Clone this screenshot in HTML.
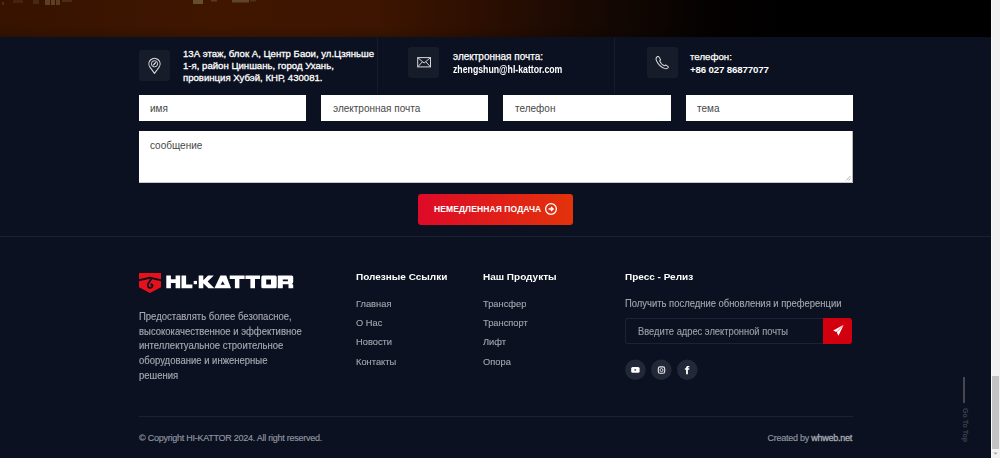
<!DOCTYPE html>
<html><head><meta charset="utf-8">
<style>
*{margin:0;padding:0;box-sizing:border-box}
html,body{width:1000px;height:458px;overflow:hidden;background:#0b1120;font-family:"Liberation Sans",sans-serif}
.abs{position:absolute;white-space:nowrap}
#hero{left:0;top:0;width:991px;height:37px;background:linear-gradient(90deg,#361300 0%,#401600 22%,#3d1500 38%,#2d0f01 48%,#1c0a03 57%,#0f0602 65%,#040100 72%,#000 80%,#000 100%)}
#hero2{left:0;top:0;width:991px;height:37px;background:linear-gradient(180deg,rgba(0,0,0,0) 0%,rgba(0,0,0,0) 70%,rgba(0,0,0,0.15) 100%)}
#sb{left:991px;top:0;width:9px;height:458px;background:#f1f1f1;border-left:1px solid #fafafa}
#thumb{left:992px;top:376px;width:7px;height:73px;background:#c3c3c3}
.vdiv{width:1px;background:#161c2b}
.ibox{width:31px;height:31px;background:#171c2b;border-radius:3px}
.ctext{color:#fff;font-size:9.6px;line-height:12.5px;-webkit-text-stroke:0.3px #fff}
.inp{background:#fff;height:26px}
.ph{color:#474747;font-size:10px;line-height:12px}
.hdiv{height:1px;background:#1a2030}
.ftit{color:#fff;font-size:9.2px;font-weight:bold;line-height:12px;margin-top:0px;transform:scaleX(1.087);transform-origin:0 0}
.flink{color:#a3a6ae;font-size:9.8px;line-height:12px;-webkit-text-stroke:0.12px #a3a6ae;transform:scaleX(0.95);transform-origin:0 0}
.desc{color:#a5a8b0;font-size:10px;line-height:14.7px;-webkit-text-stroke:0.15px #a5a8b0;transform:scaleX(0.95);transform-origin:0 0}
.soc{width:20px;height:20px;border-radius:50%;background:#232838}
.copy{color:#9296a0;font-size:9px;line-height:10px;letter-spacing:-0.25px;-webkit-text-stroke:0.15px #9296a0}
</style></head><body>
<div id="hero" class="abs"></div>
<div id="hero2" class="abs"></div>
<svg class="abs" style="left:0;top:0;filter:blur(0.7px)" width="300" height="8" viewBox="0 0 300 8">
 <g opacity="0.5">
 <rect x="2" y="2" width="2" height="3" fill="#7a5a30" opacity="0.7"/>
 <rect x="13" y="0" width="10" height="3" fill="#6a4a22" opacity="0.6"/>
 <rect x="33" y="0" width="6" height="4" fill="#6e5a38" opacity="0.6"/>
 <rect x="45" y="0" width="5" height="5" fill="#8d7e58" opacity="0.85"/>
 <rect x="51" y="0" width="4" height="5" fill="#8d7e58" opacity="0.85"/>
 <rect x="56" y="0" width="4" height="5" fill="#8a7a55" opacity="0.8"/>
 <rect x="62" y="0" width="10" height="2" fill="#7a6a48" opacity="0.6"/>
 <rect x="193" y="0" width="10" height="4" fill="#9a9865" opacity="0.85"/>
 <rect x="211" y="0" width="6" height="1.5" fill="#8a8458" opacity="0.7"/>
 <rect x="232" y="0" width="17" height="2.5" fill="#9a9865" opacity="0.75"/>
 <rect x="250" y="0" width="6" height="1.5" fill="#7a7048" opacity="0.6"/>
 </g>
</svg>


<!-- contact row -->
<div class="abs vdiv" style="left:377px;top:37px;height:57px"></div>
<div class="abs vdiv" style="left:614px;top:37px;height:57px"></div>

<div class="abs ibox" style="left:139px;top:50px"></div>
<svg class="abs" style="left:139px;top:50px" width="31" height="31" viewBox="0 0 31 31">
 <path d="M15.5 23.4 L10.95 17.2 A5.6 5.6 0 1 1 20.05 17.2 Z" fill="none" stroke="#d6d7da" stroke-width="1.1" stroke-linejoin="round"/>
 <circle cx="15.5" cy="13.8" r="3.1" fill="none" stroke="#d6d7da" stroke-width="1"/>
 <path d="M14.6 14.7 L16.5 12.8" stroke="#d6d7da" stroke-width="1.3" stroke-linecap="round"/>
</svg>
<div class="abs ctext" style="left:183px;top:48.3px;line-height:12.1px">13А этаж, блок А, Центр Баои, ул.Цзяньше<br>1-я, район Циншань, город Ухань,<br>провинция Хубэй, КНР, 430081.</div>

<div class="abs ibox" style="left:408px;top:47px"></div>
<svg class="abs" style="left:408px;top:47px" width="31" height="31" viewBox="0 0 31 31">
 <rect x="9.7" y="10.6" width="12.8" height="9.3" fill="none" stroke="#d6d7da" stroke-width="1"/>
 <path d="M9.9 10.8 L16.1 16 L22.3 10.8 M9.9 19.7 L14.2 15 M22.3 19.7 L18 15" fill="none" stroke="#d6d7da" stroke-width="1"/>
</svg>
<div class="abs" style="left:453px;top:51px;color:#fff;font-size:10px;line-height:12px;-webkit-text-stroke:0.25px #fff">электронная почта:</div>
<div class="abs" style="left:453px;top:64px;color:#fff;font-size:10.4px;font-weight:bold;line-height:12px;transform:scaleX(0.84);transform-origin:0 0">zhengshun@hl-kattor.com</div>

<div class="abs ibox" style="left:647px;top:47px"></div>
<svg class="abs" style="left:647px;top:47px" width="31" height="31" viewBox="0 0 31 31">
 <path transform="translate(9.5 9) scale(0.91) translate(-9.5 -9)" d="M10.6 9.6 C9 10.6 8.6 12.4 9.6 14.4 C11.4 18 14.6 21.2 18.2 22.6 C20.2 23.4 21.6 22.8 22.4 21.6 L22.6 21 L19.6 18.8 L18.4 19.8 C16.4 19.2 13.8 16.6 13 14.4 L14 13.2 L11.8 9.6 Z" fill="none" stroke="#d6d7da" stroke-width="1.1" stroke-linejoin="round"/>
</svg>
<div class="abs" style="left:690px;top:51px;color:#fff;font-size:9.7px;line-height:12px;-webkit-text-stroke:0.25px #fff">телефон:</div>
<div class="abs" style="left:690px;top:64px;color:#fff;font-size:9.7px;font-weight:bold;letter-spacing:-0.15px;line-height:12px">+86 027 86877077</div>

<!-- form -->
<div class="abs inp" style="left:139px;top:95px;width:167px"></div>
<div class="abs inp" style="left:321px;top:95px;width:167px"></div>
<div class="abs inp" style="left:503px;top:95px;width:167.5px"></div>
<div class="abs inp" style="left:686px;top:95px;width:167px"></div>
<div class="abs ph" style="left:150px;top:103px">имя</div>
<div class="abs ph" style="left:333px;top:103px">электронная почта</div>
<div class="abs ph" style="left:515px;top:103px">телефон</div>
<div class="abs ph" style="left:697px;top:103px">тема</div>
<div class="abs inp" style="left:139px;top:131px;width:714px;height:52px;border-right:1px solid #b8b8b8;border-bottom:1px solid #c8c8c8"></div>
<svg class="abs" style="left:843.5px;top:173.5px" width="8" height="8" viewBox="0 0 8 8"><path d="M6.5 2 L2 6.5 M6.5 4.5 L4.5 6.5" stroke="#9a9a9a" stroke-width="0.8"/></svg>
<div class="abs ph" style="left:150px;top:140px">сообщение</div>

<div class="abs" style="left:418px;top:194px;width:155px;height:31px;border-radius:3px;background:linear-gradient(90deg,#de0a28,#e2330b)"></div>
<div class="abs" style="left:434px;top:204px;color:#fff;font-size:8.5px;font-weight:bold;letter-spacing:0.1px;line-height:10px">НЕМЕДЛЕННАЯ ПОДАЧА</div>
<svg class="abs" style="left:543px;top:201px" width="16" height="16" viewBox="0 0 16 16">
 <circle cx="8" cy="8" r="5.4" fill="none" stroke="#fff" stroke-width="1.3"/>
 <path d="M5.6 8 H9.6 M8 6 L10.2 8 L8 10" fill="none" stroke="#fff" stroke-width="1.3" stroke-linejoin="miter"/>
</svg>

<div class="abs hdiv" style="left:0;top:235.5px;width:991px;background:#1b2131"></div>

<!-- footer -->
<svg class="abs" style="left:130px;top:266px" width="170" height="32" viewBox="130 266 170 32">
 <path d="M139 273 H161 V279.3 L150 276.8 L139 279.3 Z" fill="#e6111b"/>
 <path d="M139 281.2 L150 278.7 L161 281.2 V287.3 L150 293 L139 287.3 Z" fill="#e6111b"/>
 <path d="M150.9 279.6 C149.9 281.2 148.2 282.6 147.9 284.6 C147.6 286.6 148.6 287.8 150 287.8 C151.6 287.8 152.6 286.6 152.5 285.2 L151.2 284.2" fill="none" stroke="#0b1120" stroke-width="1.8" stroke-linecap="round"/>
 <g fill="#fff">
  <!-- H -->
  <path d="M166.3 275.5 H170.9 V279.3 H175.6 V275.5 H180.2 V288.3 H175.6 V283 H170.9 V288.3 H166.3 Z"/>
  <!-- L -->
  <path d="M181.5 275.5 H186.1 V284.5 H192.4 V288.3 H181.5 Z"/>
  <!-- dot -->
  <rect x="193.7" y="280.9" width="3.3" height="3.3"/>
  <!-- K -->
  <path d="M198.7 275.5 H203.3 V280.2 L208 275.5 H213.8 L207.6 281.6 L214.4 288.3 H208.4 L203.3 283.2 V288.3 H198.7 Z"/>
  <!-- A -->
  <path d="M220.4 275.5 H226.2 L231 288.3 H214.4 Z M222.7 281.2 L220.6 284.8 H224.8 Z" fill-rule="evenodd"/>
  <!-- T -->
  <path d="M229.7 275.5 H244.6 V279 H239.4 V288.3 H234.9 V279 H229.7 Z"/>
  <path d="M245.4 275.5 H260 V279 H255 V288.3 H250.4 V279 H245.4 Z"/>
  <!-- O -->
  <path d="M262.8 275.5 H275.2 Q276.7 275.5 276.7 277 V286.8 Q276.7 288.3 275.2 288.3 H262.8 Q261.3 288.3 261.3 286.8 V277 Q261.3 275.5 262.8 275.5 Z M266.2 279.4 V284.6 H271 V279.4 Z"/>
  <!-- R -->
  <path d="M277.8 275.5 H291.6 Q293.2 275.5 293.2 277 V282 Q293.2 283.6 291.8 283.8 L293.2 284.8 V288.3 H288.5 V284.3 H282.8 V288.3 H277.8 Z M282.8 279.4 V281.3 H287.9 V279.4 Z"/>
 </g>
</svg>
<div class="abs desc" style="left:139px;top:310px">Предоставлять более безопасное,<br>высококачественное и эффективное<br>интеллектуальное строительное<br>оборудование и инженерные<br>решения</div>

<div class="abs ftit" style="left:356px;top:271px">Полезные Ссылки</div>
<div class="abs flink" style="left:356px;top:297.9px">Главная</div>
<div class="abs flink" style="left:356px;top:317px">О Нас</div>
<div class="abs flink" style="left:356px;top:336.3px">Новости</div>
<div class="abs flink" style="left:356px;top:355.9px">Контакты</div>

<div class="abs ftit" style="left:483px;top:271px">Наш Продукты</div>
<div class="abs flink" style="left:483px;top:297.9px">Трансфер</div>
<div class="abs flink" style="left:483px;top:317px">Транспорт</div>
<div class="abs flink" style="left:483px;top:336.3px">Лифт</div>
<div class="abs flink" style="left:483px;top:355.9px">Опора</div>

<div class="abs ftit" style="left:625px;top:271px">Пресс - Релиз</div>
<div class="abs flink" style="left:625px;top:298px;font-size:10px;transform:scaleX(0.943)">Получить последние обновления и преференции</div>
<div class="abs" style="left:625px;top:317.5px;width:199px;height:26.5px;border:1px solid #1e2333;border-right:none;border-radius:3px 0 0 3px"></div>
<div class="abs flink" style="left:638px;top:326px;color:#9a9da6;font-size:10.2px;transform:scaleX(0.915);-webkit-text-stroke:0.15px #9a9da6">Введите адрес электронной почты</div>
<div class="abs" style="left:823px;top:318px;width:29px;height:26px;background:#d2000e;border-radius:0 3px 3px 0"></div>
<svg class="abs" style="left:823px;top:318px" width="29" height="26" viewBox="0 0 29 26">
 <path d="M20.7 6.8 L10.2 12.6 L13.2 14 L14.2 12.9 L13.9 14.4 L15.5 17.8 Z" fill="#fff"/><path d="M20.4 7.1 L14.1 13.6" stroke="#d2000e" stroke-width="0.5"/>
</svg>

<svg class="abs" style="left:620px;top:355px" width="85" height="30" viewBox="620 355 85 30">
 <circle cx="635.4" cy="369.8" r="10.3" fill="#232838"/>
 <circle cx="661.3" cy="369.8" r="10.3" fill="#232838"/>
 <circle cx="687.3" cy="369.8" r="10.3" fill="#232838"/>
 <rect x="631.2" y="367.1" width="8.4" height="5.7" rx="1.5" fill="#fff"/>
 <path d="M634.6 368.8 L636.5 369.95 L634.6 371.1 Z" fill="#232838"/>
 <rect x="658.3" y="366.9" width="6.4" height="6.4" rx="1.8" fill="none" stroke="#e8e8ea" stroke-width="1.1"/>
 <circle cx="661.5" cy="370.1" r="1.5" fill="none" stroke="#e8e8ea" stroke-width="0.9"/>
 <path d="M686.1 374.2 V369.8 H684.9 V368.3 H686.1 V367.6 C686.1 366.5 686.8 365.9 688 365.9 H689.4 V367.3 H688.5 C688.1 367.3 687.9 367.5 687.9 367.9 V368.3 H689.4 L689.2 369.8 H687.9 V374.2 Z" fill="#fff"/>
</svg>

<div class="abs hdiv" style="left:139px;top:416px;width:714px;background:#1b2131"></div>
<div class="abs copy" style="left:139px;top:432.5px">© Copyright HI-KATTOR 2024. All right reserved.</div>
<div class="abs copy" style="right:148px;top:432.5px">Created by <span style="color:#a9acb3;-webkit-text-stroke:0.3px #a9acb3">whweb.net</span></div>

<div class="abs" style="left:963px;top:377px;width:2px;height:26px;background:#45464e"></div>
<div class="abs" style="left:962px;top:408px;width:8px;height:33px;overflow:visible">
 <div style="position:absolute;left:-13px;top:11.5px;width:32px;height:8px;transform:rotate(90deg);color:#3e424c;font-size:7px;font-weight:bold;line-height:8px;text-align:center;white-space:nowrap">Go To Top</div>
</div>

<div id="sb" class="abs"></div>
<div id="thumb" class="abs"></div>
<svg class="abs" style="left:991px;top:449px" width="9" height="9" viewBox="0 0 9 9"><path d="M2.5 3.5 L6.5 3.5 L4.5 5.8 Z" fill="#a3a3a3"/></svg>
</body></html>
